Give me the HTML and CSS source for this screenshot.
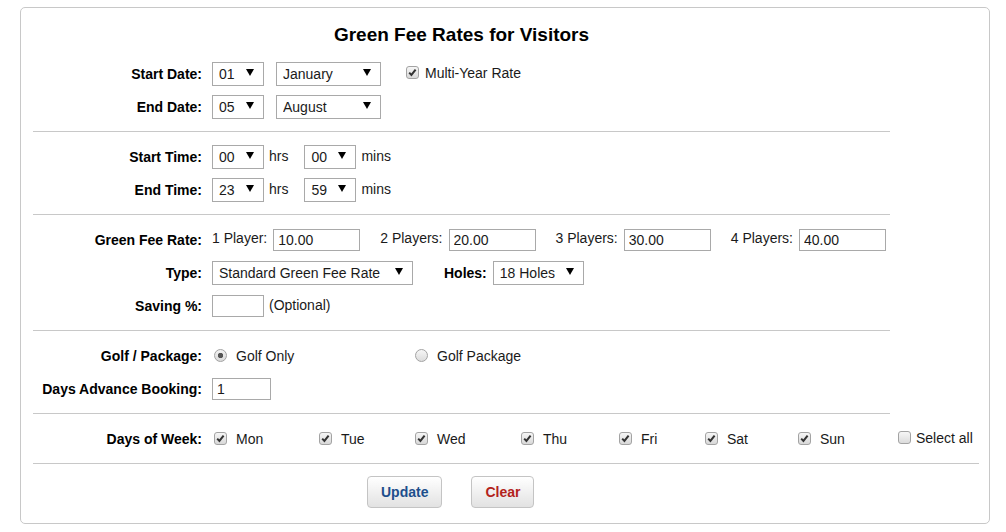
FILE: index.html
```html
<!DOCTYPE html>
<html lang="en">
  <head>
    <meta charset="UTF-8" />
    <meta name="viewport" content="width=device-width, initial-scale=1.0" />
    <title>Green Fee Rates for Visitors</title>
    <link rel="stylesheet" href="styles.css">
  </head>
  <body>
    <form class="panel" id="rateForm">
      <h2 class="panel-title">Green Fee Rates for Visitors</h2>

      <!-- Dates -->
      <div class="section first">
        <div class="row">
          <label class="row-label">Start Date:</label>
          <div class="fields">
            <span class="select-wrap"><select class="sel-sm"><option>01</option></select></span>
            <span class="select-wrap gap-month"><select class="sel-month"><option>January</option></select></span>
            <label class="opt multi-year"><input type="checkbox" class="check" checked /><span>Multi-Year Rate</span></label>
          </div>
        </div>
        <div class="row">
          <label class="row-label">End Date:</label>
          <div class="fields">
            <span class="select-wrap"><select class="sel-sm"><option>05</option></select></span>
            <span class="select-wrap gap-month"><select class="sel-month"><option>August</option></select></span>
          </div>
        </div>
      </div>

      <!-- Times -->
      <div class="section">
        <div class="row">
          <label class="row-label">Start Time:</label>
          <div class="fields">
            <span class="select-wrap"><select class="sel-sm"><option>00</option></select></span>
            <span class="unit unit-hrs">hrs</span>
            <span class="select-wrap"><select class="sel-sm"><option>00</option></select></span>
            <span class="unit">mins</span>
          </div>
        </div>
        <div class="row">
          <label class="row-label">End Time:</label>
          <div class="fields">
            <span class="select-wrap"><select class="sel-sm"><option>23</option></select></span>
            <span class="unit unit-hrs">hrs</span>
            <span class="select-wrap"><select class="sel-sm"><option>59</option></select></span>
            <span class="unit">mins</span>
          </div>
        </div>
      </div>

      <!-- Rates -->
      <div class="section">
        <div class="row">
          <label class="row-label">Green Fee Rate:</label>
          <div class="fields">
            <span class="rate-group"><span class="rate-label">1 Player:</span><input type="text" class="text-input rate" value="10.00" /></span>
            <span class="rate-group"><span class="rate-label">2 Players:</span><input type="text" class="text-input rate" value="20.00" /></span>
            <span class="rate-group"><span class="rate-label">3 Players:</span><input type="text" class="text-input rate" value="30.00" /></span>
            <span class="rate-group"><span class="rate-label">4 Players:</span><input type="text" class="text-input rate" value="40.00" /></span>
          </div>
        </div>
        <div class="row">
          <label class="row-label">Type:</label>
          <div class="fields">
            <span class="select-wrap"><select class="sel-type"><option>Standard Green Fee Rate</option></select></span>
            <label class="inline-label">Holes:</label>
            <span class="select-wrap"><select class="sel-holes"><option>18 Holes</option></select></span>
          </div>
        </div>
        <div class="row">
          <label class="row-label">Saving %:</label>
          <div class="fields">
            <input type="text" class="text-input saving" />
            <span class="hint">(Optional)</span>
          </div>
        </div>
      </div>

      <!-- Package -->
      <div class="section">
        <div class="row">
          <label class="row-label">Golf / Package:</label>
          <div class="fields golf-options">
            <label class="opt"><input type="radio" name="pkg" class="radio" checked /><span>Golf Only</span></label>
            <label class="opt"><input type="radio" name="pkg" class="radio" /><span>Golf Package</span></label>
          </div>
        </div>
        <div class="row">
          <label class="row-label">Days Advance Booking:</label>
          <div class="fields">
            <input type="text" class="text-input advance" value="1" />
          </div>
        </div>
      </div>

      <!-- Days -->
      <div class="section">
        <div class="row">
          <label class="row-label">Days of Week:</label>
          <div class="fields days">
            <label class="opt"><input type="checkbox" class="check" checked /><span>Mon</span></label>
            <label class="opt"><input type="checkbox" class="check" checked /><span>Tue</span></label>
            <label class="opt"><input type="checkbox" class="check" checked /><span>Wed</span></label>
            <label class="opt"><input type="checkbox" class="check" checked /><span>Thu</span></label>
            <label class="opt"><input type="checkbox" class="check" checked /><span>Fri</span></label>
            <label class="opt"><input type="checkbox" class="check" checked /><span>Sat</span></label>
            <label class="opt"><input type="checkbox" class="check" checked /><span>Sun</span></label>
            <label class="opt select-all"><input type="checkbox" class="check" /><span>Select all</span></label>
          </div>
        </div>
      </div>

      <div class="actions">
        <button type="submit" class="btn btn-update">Update</button>
        <button type="reset" class="btn btn-clear">Clear</button>
      </div>
    </form>
  </body>
</html>
```

FILE: styles.css
```css
body {
  margin: 0;
  font-family: "Liberation Sans", Arial, sans-serif;
  font-size: 14px;
  color: #1a1a1a;
  background: #fff;
}

.panel {
  width: 857px;
  margin: 7px 0 0 20px;
  padding: 16px 99px 15px 12px;
  border: 1px solid #c8c8c8;
  border-radius: 5px;
}

.panel-title {
  margin: 0 0 11px;
  font-size: 19px;
  line-height: 22px;
  text-align: center;
  color: #000;
}

.section {
  padding: 8px 0;
  border-top: 1px solid #c8c8c8;
}

.section.first {
  padding-top: 0;
  border-top: none;
}

.row {
  display: grid;
  grid-template-columns: 169px auto;
  column-gap: 10px;
  align-items: center;
  height: 33px;
}

.row-label {
  text-align: right;
  font-weight: bold;
  color: #000;
  white-space: nowrap;
}

.fields {
  display: flex;
  align-items: center;
  white-space: nowrap;
}

/* selects */
.select-wrap {
  position: relative;
  display: inline-block;
}

.select-wrap::after {
  content: "";
  position: absolute;
  right: 10px;
  top: 7px;
  border-left: 4px solid transparent;
  border-right: 4px solid transparent;
  border-top: 7px solid #000;
  pointer-events: none;
}

select {
  -webkit-appearance: none;
  appearance: none;
  display: block;
  height: 24px;
  margin: 0;
  padding: 0 0 0 6px;
  border: 1px solid #a9a9a9;
  border-radius: 0;
  background: #fff;
  font: 14px "Liberation Sans", Arial, sans-serif;
  color: #1a1a1a;
}

.sel-sm { width: 52px; }
.sel-month { width: 105px; }
.sel-type { width: 201px; }
.sel-holes { width: 91px; }

.gap-month {
  margin-left: 12px;
}

.unit {
  margin: -2px 4px 0 5px;
}

.unit-hrs {
  margin-right: 16px;
}

/* text inputs */
.text-input {
  box-sizing: border-box;
  height: 22px;
  margin: 0;
  padding: 1px 4px 0;
  border: 1px solid #a9a9a9;
  border-radius: 0;
  font: 14px "Liberation Sans", Arial, sans-serif;
  color: #1a1a1a;
}

.rate { width: 87px; }
.saving { width: 52px; }
.advance { width: 59px; }

.rate-group {
  display: flex;
  align-items: center;
  gap: 6px;
  margin-left: 20px;
}

.rate-group:first-child {
  margin-left: 0;
}

.rate-label {
  margin-top: -3px;
}

.inline-label {
  margin: 0 6px 0 31px;
  font-weight: bold;
  color: #000;
}

.hint {
  margin: -2px 0 0 5px;
}

/* checkboxes and radios */
.opt {
  display: inline-flex;
  align-items: center;
  gap: 9px;
}

.check,
.radio {
  -webkit-appearance: none;
  appearance: none;
  box-sizing: border-box;
  width: 13px;
  height: 13px;
  margin: 0 0 0 2px;
  border: 1px solid #a3a3a3;
  background: linear-gradient(#f6f6f6, #dcdcdc);
}

.check {
  border-radius: 3px;
}

.check:checked {
  background: url("data:image/svg+xml,%3Csvg xmlns='http://www.w3.org/2000/svg' viewBox='0 0 11 11'%3E%3Cpath d='M2.2 5.6 L4.4 7.9 L8.6 2.6' fill='none' stroke='%23333' stroke-width='2'/%3E%3C/svg%3E") center / 11px 11px no-repeat,
    linear-gradient(#f6f6f6, #d8d8d8);
}

.radio {
  border-radius: 50%;
}

.radio:checked {
  background: radial-gradient(circle, #555 0, #555 2.4px, transparent 3px),
    linear-gradient(#f2f2f2, #d8d8d8);
}

.multi-year {
  gap: 6px;
  margin: -2px 0 0 23px;
}

.golf-options {
  display: grid;
  grid-template-columns: 201px auto;
}

.days {
  display: grid;
  grid-template-columns: 105px 96px 106px 98px 86px 93px 100px auto;
}

.select-all {
  gap: 5px;
  margin-top: -2px;
}

/* buttons */
.actions {
  display: flex;
  gap: 29px;
  margin-right: -89px;
  padding: 12px 0 0 334px;
  border-top: 1px solid #c8c8c8;
}

.btn {
  height: 32px;
  padding: 0 13px;
  border: 1px solid #c4c4c4;
  border-radius: 4px;
  background: linear-gradient(#ffffff, #e2e2e2);
  font: bold 14px "Liberation Sans", Arial, sans-serif;
  cursor: pointer;
}

.btn-update {
  color: #1d4f8c;
}

.btn-clear {
  color: #b3231c;
}
```
